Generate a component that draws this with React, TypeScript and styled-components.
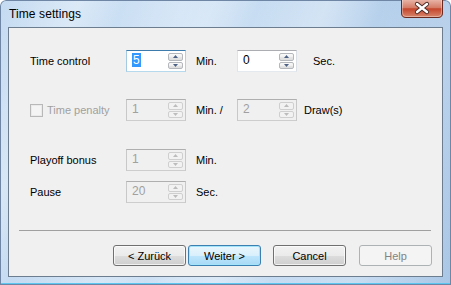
import React from 'react'
import styled, {createGlobalStyle, css} from 'styled-components'

const GlobalStyle = createGlobalStyle`
  html, body {
    margin: 0;
    padding: 0;
    background: #ffffff;
  }
  body {
    font-family: "Liberation Sans", Arial, sans-serif;
  }
`

const Window = styled.div`
  box-sizing: border-box;
  width: 451px;
  height: 285px;
  display: flex;
  flex-direction: column;
  padding: 0 8px 8px 8px;
  border-radius: 6px 6px 0 0;
  background:
    linear-gradient(112deg,
      rgba(255, 255, 255, 0) 0%,
      rgba(255, 255, 255, 0.35) 14%,
      rgba(255, 255, 255, 0) 22%,
      rgba(255, 255, 255, 0.25) 38%,
      rgba(255, 255, 255, 0) 46%,
      rgba(255, 255, 255, 0.3) 58%,
      rgba(255, 255, 255, 0) 68%,
      rgba(255, 255, 255, 0.2) 82%,
      rgba(255, 255, 255, 0) 100%),
    linear-gradient(to right, #c3daf1 0%, #cfe2f5 40%, #bfd7ef 75%, #a9c6e6 100%);
  box-shadow: inset 0 0 0 1px #6f87a4, inset 0 -2px 0 0 #5cc7f0;
`

const TitleBar = styled.div`
  height: 27px;
  display: flex;
  align-items: flex-start;
  justify-content: space-between;
`

const Title = styled.span`
  margin: 7px 0 0 1px;
  font-size: 12px;
  color: #000;
  letter-spacing: 0.1px;
`

const CloseButton = styled.div`
  width: 42px;
  height: 18px;
  line-height: 0;
`

const Client = styled.div`
  flex: 1;
  display: flex;
  flex-direction: column;
  background: #f0f0f0;
  border: 1px solid #6d7d90;
`

const Form = styled.div`
  padding: 22px 0 0 21px;
  display: flex;
  flex-direction: column;
`

const Row = styled.div<{$top?: number}>`
  display: flex;
  align-items: center;
  height: 22px;
  margin-top: ${p => p.$top ?? 0}px;
`

const Label = styled.label<{$disabled?: boolean}>`
  display: flex;
  align-items: center;
  width: 96px;
  font-size: 11px;
  color: ${p => (p.$disabled ? '#a0a0a0' : '#000')};
`

const CheckBox = styled.span`
  box-sizing: border-box;
  width: 13px;
  height: 13px;
  margin-right: 4px;
  border: 1px solid #b8b8b8;
  background: #f4f4f4;
  box-shadow: inset 0 0 0 1px #eaeaea;
`

const Unit = styled.span<{$gap?: number; $width?: number}>`
  font-size: 11px;
  color: #000;
  margin-left: ${p => p.$gap ?? 10}px;
  width: ${p => (p.$width ? `${p.$width}px` : 'auto')};
`

const SpinBox = styled.div<{$state: 'focus' | 'normal' | 'disabled'}>`
  box-sizing: border-box;
  width: 60px;
  height: 22px;
  display: flex;
  align-items: stretch;
  border: 1px solid;
  ${p =>
    p.$state === 'focus' &&
    css`
      background: #fff;
      border-color: #3d7bad #b5cfe7 #b7d9ed #a4c9e3;
    `}
  ${p =>
    p.$state === 'normal' &&
    css`
      background: #fff;
      border-color: #abadb3 #dbdfe6 #e3e9ef #e2e3ea;
    `}
  ${p =>
    p.$state === 'disabled' &&
    css`
      background: #f0f0f0;
      border-color: #afafaf #c8c8c8 #cdcdcd #c8c8c8;
    `}
`

const SpinValue = styled.span<{$disabled?: boolean}>`
  flex: 1;
  padding: 2px 0 0 5px;
  font-size: 12px;
  color: ${p => (p.$disabled ? '#a0a0a0' : '#000')};
`

const Selected = styled.span`
  background: #3399ff;
  color: #fff;
  padding: 0 1px;
`

const SpinButtons = styled.div`
  display: flex;
  flex-direction: column;
  gap: 1px;
  width: 15px;
  margin: 2px 2px 2px 0;
`

const SpinButton = styled.div<{$disabled?: boolean}>`
  flex: 1;
  box-sizing: border-box;
  display: flex;
  align-items: center;
  justify-content: center;
  border: 1px solid ${p => (p.$disabled ? '#cfcfcf' : '#b4b7bb')};
  border-radius: 2px;
  background: ${p =>
    p.$disabled
      ? '#f2f2f2'
      : 'linear-gradient(to bottom, #fafafa 0%, #f0f0f0 50%, #e6e6e6 51%, #dedede 100%)'};
  line-height: 0;
`

const Separator = styled.div`
  margin: 27px 11px 0 10px;
  height: 1px;
  background: #a0a0a0;
`

const Footer = styled.div`
  display: flex;
  justify-content: flex-end;
  padding: 14px 10px 0 0;
`

const Button = styled.div<{$kind?: 'default' | 'disabled'; $gap?: number}>`
  box-sizing: border-box;
  width: 73px;
  height: 21px;
  margin-left: ${p => p.$gap ?? 0}px;
  display: flex;
  align-items: center;
  justify-content: center;
  font-size: 11px;
  border-radius: 3px;
  border: 1px solid #707070;
  color: #000;
  background: linear-gradient(to bottom, #f2f2f2 0%, #ebebeb 50%, #dddddd 51%, #cfcfcf 100%);
  box-shadow: inset 0 0 0 1px rgba(255, 255, 255, 0.7);
  ${p =>
    p.$kind === 'default' &&
    css`
      border-color: #3c7fb1;
      background: linear-gradient(to bottom, #eaf6fd 0%, #d9f0fc 50%, #bee6fd 51%, #a7d9f5 100%);
      box-shadow: inset 0 0 0 1px #a4e4fa;
    `}
  ${p =>
    p.$kind === 'disabled' &&
    css`
      border-color: #adb2b5;
      background: #f4f4f4;
      color: #838383;
      box-shadow: none;
    `}
`

const Arrow = ({up, disabled}: {up?: boolean; disabled?: boolean}) => (
  <svg width="5" height="3" viewBox="0 0 5 3">
    <path
      d={up ? 'M0 3 L2.5 0 L5 3 Z' : 'M0 0 L2.5 3 L5 0 Z'}
      fill={disabled ? '#bcbcbc' : '#4d6185'}
    />
  </svg>
)

type SpinProps = {
  value: string
  state: 'focus' | 'normal' | 'disabled'
}

const Spin = ({value, state}: SpinProps) => {
  const disabled = state === 'disabled'
  return (
    <SpinBox $state={state}>
      <SpinValue $disabled={disabled}>
        {state === 'focus' ? <Selected>{value}</Selected> : value}
      </SpinValue>
      <SpinButtons>
        <SpinButton $disabled={disabled}><Arrow up disabled={disabled} /></SpinButton>
        <SpinButton $disabled={disabled}><Arrow disabled={disabled} /></SpinButton>
      </SpinButtons>
    </SpinBox>
  )
}

const CloseIcon = () => (
  <svg width="42" height="18" viewBox="0 0 42 18">
    <defs>
      <linearGradient id="closeBg" x1="0" y1="0" x2="0" y2="1">
        <stop offset="0" stopColor="#e8b3a6" />
        <stop offset="0.45" stopColor="#d47a66" />
        <stop offset="0.5" stopColor="#c4452c" />
        <stop offset="1" stopColor="#d98a6f" />
      </linearGradient>
    </defs>
    <path d="M0.5 0 V13 Q0.5 17.5 5 17.5 H37 Q41.5 17.5 41.5 13 V0" fill="url(#closeBg)" stroke="#6b2a20" />
    <path d="M1.5 0 V13 Q1.5 16.5 5 16.5 H37 Q40.5 16.5 40.5 13 V0" fill="none" stroke="rgba(255,255,255,0.35)" />
    <path d="M16 4 L26 12 M26 4 L16 12" stroke="#4a2a26" strokeWidth="4.2" strokeLinecap="round" />
    <path d="M16 4 L26 12 M26 4 L16 12" stroke="#ffffff" strokeWidth="2.4" strokeLinecap="round" />
  </svg>
)

export default function App() {
  return (
    <>
      <GlobalStyle />
      <Window>
        <TitleBar>
          <Title>Time settings</Title>
          <CloseButton><CloseIcon /></CloseButton>
        </TitleBar>
        <Client>
          <Form>
            <Row>
              <Label>Time control</Label>
              <Spin value="5" state="focus" />
              <Unit $width={41}>Min.</Unit>
              <Spin value="0" state="normal" />
              <Unit $gap={16}>Sec.</Unit>
            </Row>
            <Row $top={27}>
              <Label $disabled><CheckBox />Time penalty</Label>
              <Spin value="1" state="disabled" />
              <Unit $width={41}>Min. /</Unit>
              <Spin value="2" state="disabled" />
              <Unit $gap={7}>Draw(s)</Unit>
            </Row>
            <Row $top={28}>
              <Label>Playoff bonus</Label>
              <Spin value="1" state="disabled" />
              <Unit>Min.</Unit>
            </Row>
            <Row $top={10}>
              <Label>Pause</Label>
              <Spin value="20" state="disabled" />
              <Unit>Sec.</Unit>
            </Row>
          </Form>
          <Separator />
          <Footer>
            <Button>&lt; Zurück</Button>
            <Button $kind="default" $gap={2}>Weiter &gt;</Button>
            <Button $gap={12}>Cancel</Button>
            <Button $kind="disabled" $gap={13}>Help</Button>
          </Footer>
        </Client>
      </Window>
    </>
  )
}
